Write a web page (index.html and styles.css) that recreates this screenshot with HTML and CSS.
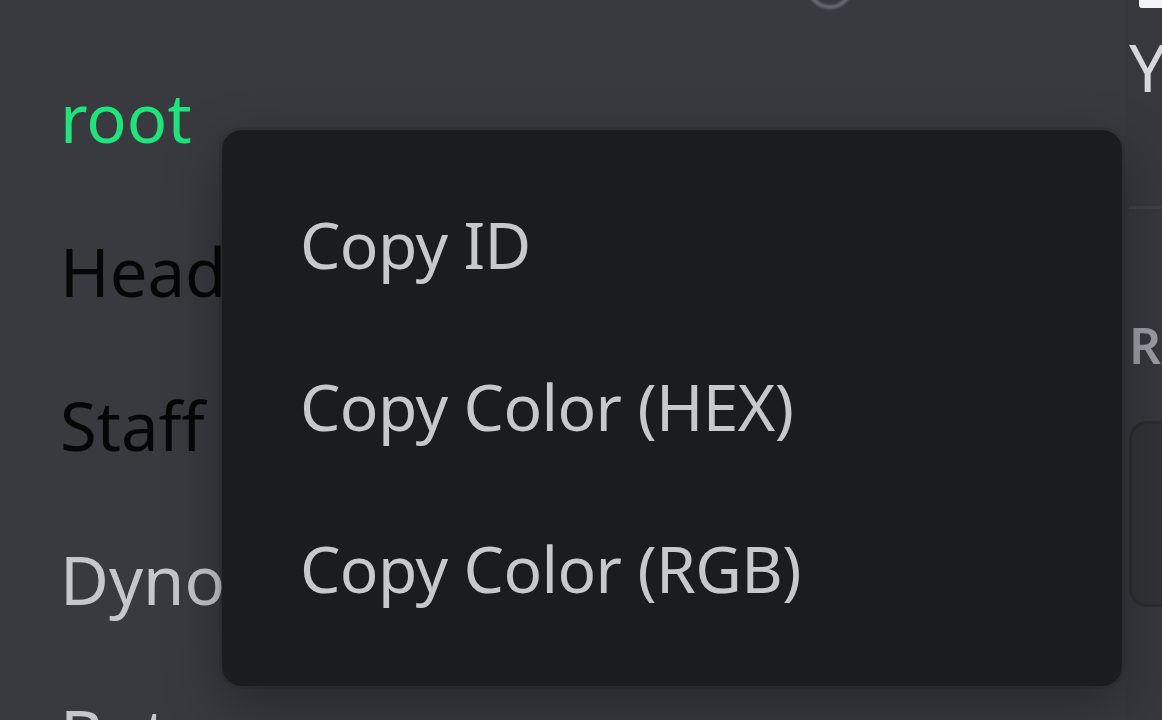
FILE: index.html
```html
<!DOCTYPE html>
<html lang="en">
<head>
<meta charset="utf-8">
<title>Role context menu</title>
<link rel="stylesheet" href="styles.css">
</head>
<body>
<div class="app">
  <section class="roles">
    <div class="roles-top"><span class="ring"></span></div>
    <ul class="role-list">
      <li class="role role-root">root</li>
      <li class="role role-dark">Head</li>
      <li class="role role-dark">Staff</li>
      <li class="role role-light">Dyno</li>
      <li class="role role-light">Bots</li>
    </ul>
  </section>
  <aside class="side">
    <div class="side-name"></div>
    <div class="side-sub">Y</div>
    <div class="side-sep"></div>
    <div class="side-label">R</div>
    <div class="side-input"></div>
  </aside>
  <div class="menu" role="menu">
    <div class="menu-item" role="menuitem">Copy ID</div>
    <div class="menu-item" role="menuitem">Copy Color (HEX)</div>
    <div class="menu-item" role="menuitem">Copy Color (RGB)</div>
  </div>
</div>
</body>
</html>
```

FILE: styles.css
```css
* { box-sizing: border-box; }
html, body { margin: 0; padding: 0; }
body {
  background: #383a40;
  font-family: "Noto Sans", "Open Sans", sans-serif;
}
.app {
  position: relative;
  width: 1162px;
  height: 720px;
  overflow: hidden;
  display: flex;
  background: #383a40;
}
.roles {
  width: 1125px;
  flex: none;
  display: flex;
  flex-direction: column;
}
.roles-top {
  height: 40px;
  flex: none;
  display: flex;
}
.ring {
  display: block;
  width: 46px;
  height: 46px;
  margin-top: -37px;
  margin-left: 807px;
  border-radius: 50%;
  border: 4px solid #686b72;
  filter: blur(1px);
}
.role-list {
  flex: none;
  list-style: none;
  margin: 0;
  padding: 0 0 0 60px;
}
.role {
  height: 154px;
  line-height: 154px;
  font-size: 67px;
  white-space: nowrap;
}
.role-root { color: #1fe37b; }
.role-dark { color: #060607; }
.role-light { color: #c4c7cc; }

.side {
  flex: 1;
  display: flex;
  flex-direction: column;
  background: #36383e;
  padding-left: 4px;
  overflow: hidden;
}
.side-name {
  flex: none;
  margin-top: -4px;
  margin-left: 10px;
  height: 12px;
  width: 40px;
  background: #f2f3f5;
  border-radius: 3px;
}
.side-sub {
  flex: none;
  margin-top: 14px;
  font-size: 66px;
  line-height: 88px;
  color: #d4d7dc;
  white-space: nowrap;
}
.side-sep {
  flex: none;
  margin-top: 96px;
  height: 3px;
  background: #3f4147;
}
.side-label {
  flex: none;
  margin-top: 106px;
  font-size: 50px;
  font-weight: 600;
  line-height: 60px;
  color: #9a9ea5;
}
.side-input {
  flex: none;
  margin-top: 46px;
  height: 186px;
  background: #313338;
  border: 3px solid #2b2d31;
  border-right: none;
  border-radius: 18px 0 0 18px;
}

.menu {
  position: absolute;
  left: 222px;
  top: 130px;
  width: 900px;
  height: 556px;
  padding: 34px 40px 36px;
  background: #1b1c20;
  border-radius: 20px;
  box-shadow: 0 20px 60px rgba(0, 0, 0, 0.32), 0 0 0 3px rgba(0, 0, 0, 0.08);
}
.menu-item {
  height: 162px;
  line-height: 162px;
  padding-left: 38px;
  font-size: 64px;
  color: #c6c8cc;
  white-space: nowrap;
  letter-spacing: -0.6px;
}
```
